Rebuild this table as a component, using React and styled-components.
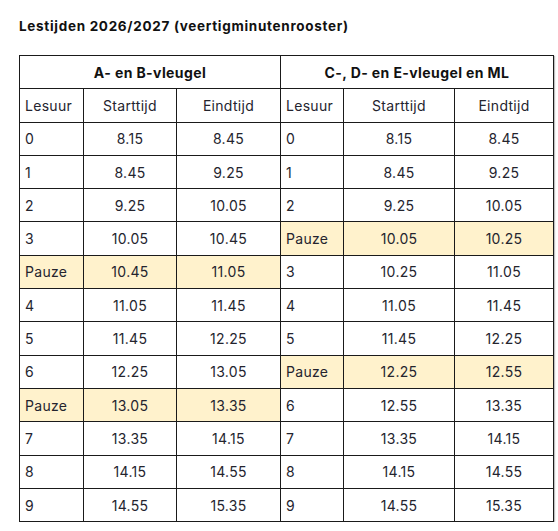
import React from "react";
import styled, { createGlobalStyle } from "styled-components";

const Global = createGlobalStyle`
  html, body { margin: 0; padding: 0; background: #ffffff; }
  body { font-family: Inter, "Noto Sans", "Liberation Sans", sans-serif; color: #24242e; }
`;

const Page = styled.div`
  padding: 17px 0 0 19px;
  width: 534px;
`;

const Title = styled.h1`
  margin: 0 0 20px 0;
  font-size: 13.5px;
  line-height: 18px;
  letter-spacing: 0.7px;
  font-weight: 700;
  color: #111;
`;

const Table = styled.table`
  border-collapse: collapse;
  width: 534px;
  table-layout: fixed;
  box-shadow: 1px 1px 1px rgba(0,0,0,0.25);
`;

const GroupHead = styled.th`
  border: 1px solid #1a1a1a;
  height: 32.3px;
  padding: 0;
  font-size: 14px;
  letter-spacing: 0.4px;
  font-weight: 700;
  text-align: center;
  color: #111;
`;

const Cell = styled.td`
  border: 1px solid #1a1a1a;
  height: 32.3px;
  padding: 0 0 0 ${(p) => (p.$left ? "5px" : "0")};
  font-size: 14px;
  letter-spacing: 0.3px;
  text-align: ${(p) => (p.$left ? "left" : "center")};
  background: ${(p) => (p.$pause ? "#fff2cc" : "transparent")};
  white-space: nowrap;
`;

const left = [
  ["0", "8.15", "8.45"],
  ["1", "8.45", "9.25"],
  ["2", "9.25", "10.05"],
  ["3", "10.05", "10.45"],
  ["Pauze", "10.45", "11.05"],
  ["4", "11.05", "11.45"],
  ["5", "11.45", "12.25"],
  ["6", "12.25", "13.05"],
  ["Pauze", "13.05", "13.35"],
  ["7", "13.35", "14.15"],
  ["8", "14.15", "14.55"],
  ["9", "14.55", "15.35"],
];

const right = [
  ["0", "8.15", "8.45"],
  ["1", "8.45", "9.25"],
  ["2", "9.25", "10.05"],
  ["Pauze", "10.05", "10.25"],
  ["3", "10.25", "11.05"],
  ["4", "11.05", "11.45"],
  ["5", "11.45", "12.25"],
  ["Pauze", "12.25", "12.55"],
  ["6", "12.55", "13.35"],
  ["7", "13.35", "14.15"],
  ["8", "14.15", "14.55"],
  ["9", "14.55", "15.35"],
];

function Group({ row }) {
  const pause = row[0] === "Pauze";
  return (
    <>
      <Cell $left $pause={pause}>{row[0]}</Cell>
      <Cell $pause={pause}>{row[1]}</Cell>
      <Cell $pause={pause}>{row[2]}</Cell>
    </>
  );
}

export default function App() {
  return (
    <>
      <Global />
      <Page>
        <Title>Lestijden 2026/2027 (veertigminutenrooster)</Title>
        <Table>
          <colgroup>
            <col style={{ width: 64 }} />
            <col style={{ width: 93 }} />
            <col style={{ width: 104 }} />
            <col style={{ width: 63 }} />
            <col style={{ width: 111 }} />
            <col style={{ width: 99 }} />
          </colgroup>
          <thead>
            <tr>
              <GroupHead colSpan={3}>A- en B-vleugel</GroupHead>
              <GroupHead colSpan={3}>C-, D- en E-vleugel en ML</GroupHead>
            </tr>
          </thead>
          <tbody>
            <tr>
              <Cell $left>Lesuur</Cell>
              <Cell>Starttijd</Cell>
              <Cell>Eindtijd</Cell>
              <Cell $left>Lesuur</Cell>
              <Cell>Starttijd</Cell>
              <Cell>Eindtijd</Cell>
            </tr>
            {left.map((r, i) => (
              <tr key={i}>
                <Group row={r} />
                <Group row={right[i]} />
              </tr>
            ))}
          </tbody>
        </Table>
      </Page>
    </>
  );
}
